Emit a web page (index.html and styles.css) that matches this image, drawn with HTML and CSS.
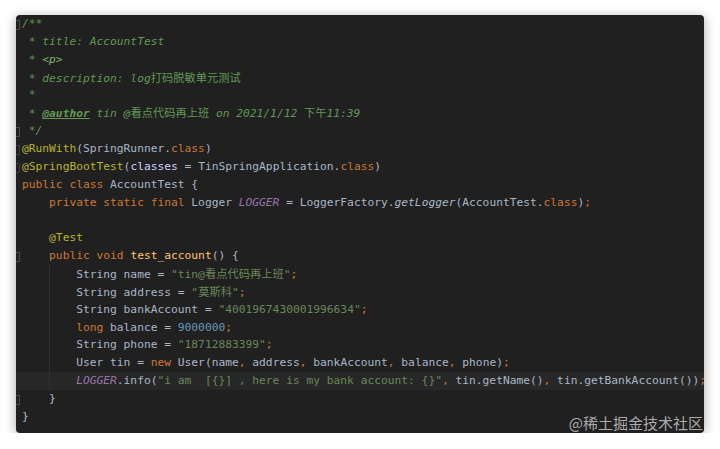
FILE: index.html
```html
<!DOCTYPE html>
<html>
<head>
    <meta charset="UTF-8">
    <title>AccountTest</title>
    <link rel="stylesheet" href="styles.css">
</head>
<body>
    <div class="editor">
        <div class="line"><span class="gutter"><i class="mark"></i></span><code class="doc">/**</code></div>
        <div class="line"><span class="gutter"></span><code class="doc"> * title: AccountTest</code></div>
        <div class="line"><span class="gutter"></span><code class="doc"> * <span class="tag">&lt;p&gt;</span></code></div>
        <div class="line"><span class="gutter"></span><code class="doc"> * description: log<span class="cjk">打码脱敏单元测试</span></code></div>
        <div class="line"><span class="gutter"></span><code class="doc"> *</code></div>
        <div class="line"><span class="gutter"></span><code class="doc"> * <span class="doc-tag">@author</span> tin @<span class="cjk">看点代码再上班</span> on 2021/1/12 <span class="cjk">下午</span>11:39</code></div>
        <div class="line"><span class="gutter"><i class="mark"></i></span><code class="doc"> */</code></div>
        <div class="line"><span class="gutter"><i class="mark dark"></i></span><code><span class="ann">@RunWith</span>(SpringRunner.<span class="kw">class</span>)</code></div>
        <div class="line"><span class="gutter"><i class="mark dark"></i></span><code><span class="ann">@SpringBootTest</span>(<span class="attr">classes</span> = TinSpringApplication.<span class="kw">class</span>)</code></div>
        <div class="line"><span class="gutter"></span><code><span class="kw">public class</span> AccountTest {</code></div>
        <div class="line"><span class="gutter"></span><code>    <span class="kw">private static final</span> Logger <span class="field">LOGGER</span> = LoggerFactory.<span class="static">getLogger</span>(AccountTest.<span class="kw">class</span>)<span class="kw">;</span></code></div>
        <div class="line"><span class="gutter"></span><code> </code></div>
        <div class="line"><span class="gutter"></span><code>    <span class="ann">@Test</span></code></div>
        <div class="line"><span class="gutter"><i class="mark"></i></span><code>    <span class="kw">public void</span> <span class="fn">test_account</span>() {</code></div>
        <div class="line"><span class="gutter"></span><code>    <span class="guide">    </span>String name = <span class="str">"tin@<span class="cjk">看点代码再上班</span>"</span><span class="kw">;</span></code></div>
        <div class="line"><span class="gutter"></span><code>    <span class="guide">    </span>String address = <span class="str">"<span class="cjk">莫斯科</span>"</span><span class="kw">;</span></code></div>
        <div class="line"><span class="gutter"></span><code>    <span class="guide">    </span>String bankAccount = <span class="str">"4001967430001996634"</span><span class="kw">;</span></code></div>
        <div class="line"><span class="gutter"></span><code>    <span class="guide">    </span><span class="kw">long</span> balance = <span class="num">9000000</span><span class="kw">;</span></code></div>
        <div class="line"><span class="gutter"></span><code>    <span class="guide">    </span>String phone = <span class="str">"18712883399"</span><span class="kw">;</span></code></div>
        <div class="line"><span class="gutter"></span><code>    <span class="guide">    </span>User tin = <span class="kw">new</span> User(name<span class="kw">,</span> address<span class="kw">,</span> bankAccount<span class="kw">,</span> balance<span class="kw">,</span> phone)<span class="kw">;</span></code></div>
        <div class="line current"><span class="gutter"></span><code>    <span class="guide">    </span><span class="field">LOGGER</span>.info(<span class="str">"i am  [{}] , here is my bank account: {}"</span><span class="kw">,</span> tin.getName()<span class="kw">,</span> tin.getBankAccount())<span class="kw">;</span></code></div>
        <div class="line"><span class="gutter"><i class="mark"></i></span><code>    }</code></div>
        <div class="line"><span class="gutter"></span><code>}</code></div>
        <div class="watermark">@稀土掘金技术社区</div>
    </div>
</body>
</html>
```

FILE: styles.css
```css
body {
    margin: 0;
    background-color: #fff;
}

.editor {
    position: relative;
    margin: 15px 0 0 16px;
    width: 688px;
    height: 418px;
    background-color: #202020;
    border-radius: 4px;
    box-shadow: 0 2px 12px rgba(0, 0, 0, 0.35);
    overflow: hidden;
    font-family: "DejaVu Sans Mono", "Noto Sans CJK SC", monospace;
    font-size: 11.25px;
    color: #a9b7c6;
}

.line {
    display: flex;
    height: 17.86px;
    line-height: 17.86px;
}

.line.current {
    background-color: #272727;
}

.gutter {
    flex: 0 0 6px;
}

.mark {
    display: block;
    width: 3px;
    height: 8px;
    margin-top: 5px;
    border: 1px solid #4a4a4a;
    border-left: none;
}

.mark.dark {
    border-color: #3a3a3a;
}

code {
    font-family: inherit;
    white-space: pre;
}

.doc {
    color: #629755;
    font-style: italic;
}

.doc .cjk {
    font-style: normal;
}

.cjk {
    font-family: "Noto Sans CJK SC", sans-serif;
}

.tag {
    color: #77b767;
}

.doc-tag {
    font-weight: bold;
    text-decoration: underline;
}

.kw {
    color: #cc7832;
}

.ann {
    color: #bbb529;
}

.attr {
    color: #d0d0ff;
}

.field {
    color: #9876aa;
    font-style: italic;
}

.static {
    font-style: italic;
}

.fn {
    color: #ffc66d;
}

.str {
    color: #6a8759;
}

.num {
    color: #6897bb;
}

.guide {
    display: inline-block;
    height: 17.86px;
    vertical-align: top;
    box-shadow: inset 1px 0 #303030;
}

.watermark {
    position: absolute;
    right: 1px;
    bottom: 1px;
    font-family: "Noto Sans CJK SC", sans-serif;
    font-size: 15px;
    line-height: 18px;
    color: rgba(220, 220, 220, 0.75);
}
```
